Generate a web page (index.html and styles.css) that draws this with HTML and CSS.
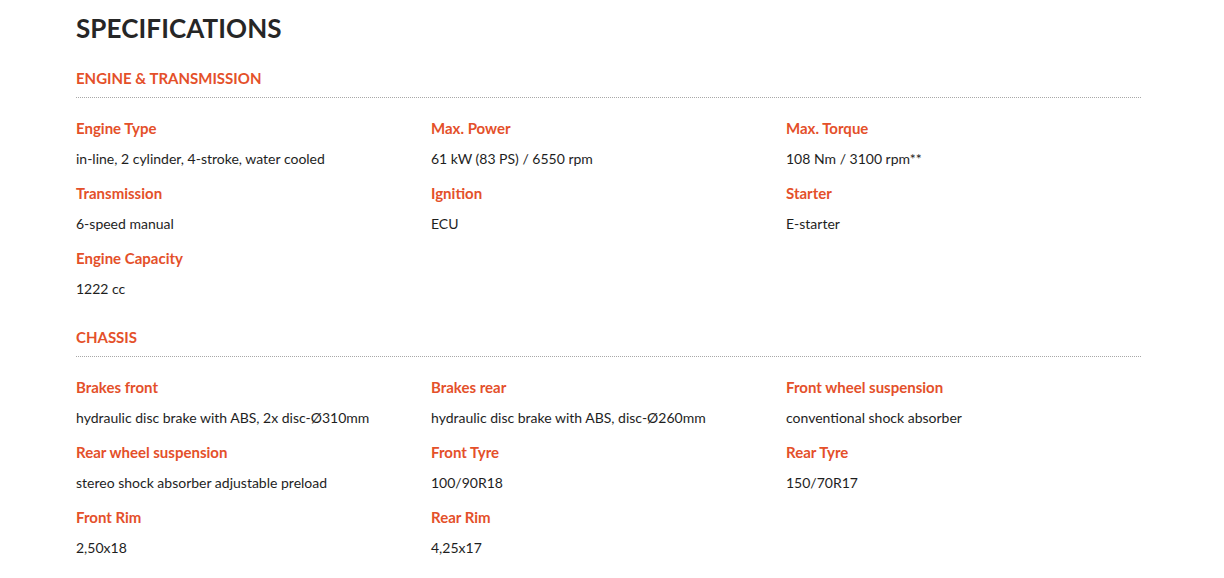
FILE: index.html
```html
<!DOCTYPE html>
<html lang="en">
<head>
<meta charset="utf-8">
<title>Specifications</title>
<link rel="stylesheet" href="styles.css">
</head>
<body>
<main class="specs">
  <h1 class="specs-title">SPECIFICATIONS</h1>

  <section class="spec-section">
    <h2 class="section-title">ENGINE &amp; TRANSMISSION</h2>
    <div class="spec-grid">
      <div class="spec-item"><div class="spec-label">Engine Type</div><div class="spec-value">in-line, 2 cylinder, 4-stroke, water cooled</div></div>
      <div class="spec-item"><div class="spec-label">Max. Power</div><div class="spec-value">61 kW (83 PS) / 6550 rpm</div></div>
      <div class="spec-item"><div class="spec-label">Max. Torque</div><div class="spec-value">108 Nm / 3100 rpm**</div></div>
      <div class="spec-item"><div class="spec-label">Transmission</div><div class="spec-value">6-speed manual</div></div>
      <div class="spec-item"><div class="spec-label">Ignition</div><div class="spec-value">ECU</div></div>
      <div class="spec-item"><div class="spec-label">Starter</div><div class="spec-value">E-starter</div></div>
      <div class="spec-item"><div class="spec-label">Engine Capacity</div><div class="spec-value">1222 cc</div></div>
    </div>
  </section>

  <section class="spec-section">
    <h2 class="section-title">CHASSIS</h2>
    <div class="spec-grid">
      <div class="spec-item"><div class="spec-label">Brakes front</div><div class="spec-value">hydraulic disc brake with ABS, 2x disc-Ø310mm</div></div>
      <div class="spec-item"><div class="spec-label">Brakes rear</div><div class="spec-value">hydraulic disc brake with ABS, disc-Ø260mm</div></div>
      <div class="spec-item"><div class="spec-label">Front wheel suspension</div><div class="spec-value">conventional shock absorber</div></div>
      <div class="spec-item"><div class="spec-label">Rear wheel suspension</div><div class="spec-value">stereo shock absorber adjustable preload</div></div>
      <div class="spec-item"><div class="spec-label">Front Tyre</div><div class="spec-value">100/90R18</div></div>
      <div class="spec-item"><div class="spec-label">Rear Tyre</div><div class="spec-value">150/70R17</div></div>
      <div class="spec-item"><div class="spec-label">Front Rim</div><div class="spec-value">2,50x18</div></div>
      <div class="spec-item"><div class="spec-label">Rear Rim</div><div class="spec-value">4,25x17</div></div>
    </div>
  </section>
</main>
</body>
</html>
```
FILE: styles.css
```css
* { box-sizing: border-box; }
html, body { margin: 0; padding: 0; background: #fff; }
body {
  font-family: Lato, "Open Sans", "Liberation Sans", sans-serif;
  color: #222;
}
.specs {
  width: 1065px;
  margin-left: 76px;
  padding-top: 10px;
}
.specs-title {
  margin: 0 0 22px;
  font-size: 26px;
  line-height: 36px;
  font-weight: 700;
  color: #262626;
  letter-spacing: 0.1px;
}
.spec-section { margin-bottom: 23px; }
.section-title {
  margin: 0;
  font-size: 15px;
  line-height: 20px;
  font-weight: 700;
  color: #e4502a;
  padding-bottom: 9px;
  border-bottom: 1px dotted #a8a8a8;
}
.spec-grid {
  display: grid;
  grid-template-columns: repeat(3, 355px);
  row-gap: 5px;
  margin-top: 16px;
}
.spec-label {
  font-size: 15px;
  line-height: 28px;
  padding-bottom: 2px;
  font-weight: 700;
  color: #e4502a;
}
.spec-value {
  font-size: 14px;
  line-height: 30px;
  color: #1e1e1e;
}
```
